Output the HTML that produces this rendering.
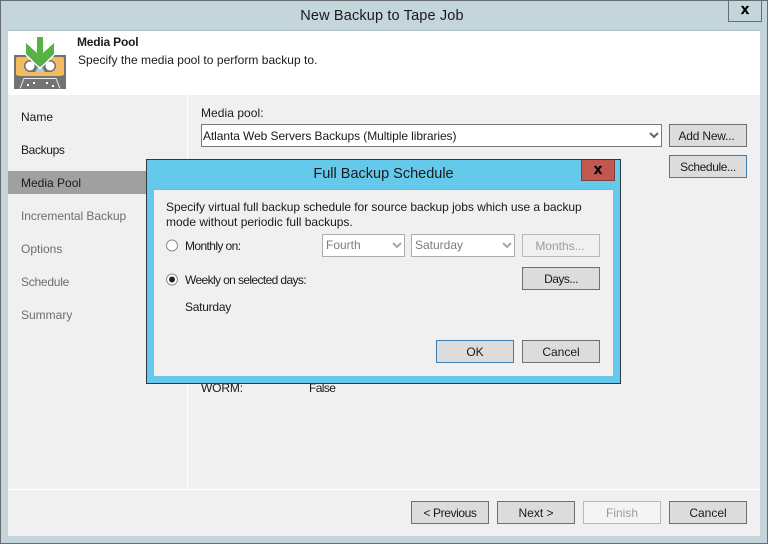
<!DOCTYPE html>
<html>
<head>
<meta charset="utf-8">
<style>
html,body{margin:0;padding:0}
body{width:768px;height:544px;overflow:hidden;position:relative;background:#c4d6dc;font-family:"Liberation Sans",sans-serif;font-size:12px;color:#1a1a1a}
.a{position:absolute;box-sizing:border-box}
.t{position:absolute;white-space:nowrap;line-height:14px}
.g{color:#6d6d6d}
.b{position:absolute;box-sizing:border-box;width:78px;height:23px;background:#dcdcdc;border:1px solid #707070;text-align:center;line-height:22px;white-space:nowrap;color:#1a1a1a}
.f{border-color:#3a7fb5}
.d{background:#f4f4f4;border-color:#b4b8b8;color:#9c9c9c}
.c{position:absolute;box-sizing:border-box;background:#fff;border:1px solid #a9adad;height:23px;line-height:21px;padding-left:3px;color:#7c7c7c;white-space:nowrap}
.x{font-weight:bold;font-size:15px;color:#000;text-align:center;-webkit-text-stroke:.3px #000}
</style>
</head>
<body>
<div class="a" style="left:0;top:0;width:768px;height:544px;border:1px solid #676c72"></div>
<div class="t" style="left:0;top:8px;width:764px;text-align:center;font-size:14.5px;line-height:16px;letter-spacing:.15px">New Backup to Tape Job</div>
<div class="a" style="left:728px;top:0;width:34px;height:22px;border:1px solid #676c72;border-top:0"></div>
<div class="t x" style="left:728px;top:3px;width:34px">x</div>

<div class="a" style="left:8px;top:31px;width:752px;height:505px;background:#f0f0f0"></div>
<div class="a" style="left:8px;top:30px;width:752px;height:1px;background:#a9bcc4"></div>
<div class="a" style="left:8px;top:31px;width:752px;height:64px;background:#fff"></div>
<div class="a" style="left:187px;top:95px;width:1px;height:394px;background:#fff"></div>
<div class="a" style="left:8px;top:489px;width:752px;height:1px;background:#fff"></div>

<svg class="a" style="left:14px;top:37px" width="52" height="53" viewBox="0 0 52 53">
<rect x="0" y="18" width="52" height="34" fill="#737373"/>
<path d="M2 22Q2 20 4 20H48Q50 20 50 22V38L46 39H6L2 38Z" fill="#f2bd62"/>
<rect x="10" y="23" width="32" height="12" rx="6" fill="#737373"/>
<circle cx="16" cy="29" r="4.500" fill="#fff"/>
<circle cx="36" cy="29" r="4.500" fill="#fff"/>
<path d="M21 35L26 27L31 35Z" fill="#a8cde8"/>
<path d="M6 51.500L10 41.500H42L46 51.500" fill="none" stroke="#ececec" stroke-width="1"/>
<rect x="13" y="47" width="2" height="2" fill="#fff"/><rect x="19" y="45" width="2" height="2" fill="#fff"/><rect x="32" y="45" width="2" height="2" fill="#fff"/><rect x="38" y="48" width="2" height="2" fill="#fff"/>
<path d="M12 18L26 31.500L40 18" fill="none" stroke="#fff" stroke-width="1.500"/>
<path d="M12 6V17L26 30L40 17V6L29 16V0H23V16Z" fill="#56b244"/>
</svg>

<div class="t" style="left:77px;top:35px;font-weight:bold;letter-spacing:-.2px">Media Pool</div>
<div class="t" style="left:78px;top:53px;letter-spacing:.03px">Specify the media pool to perform backup to.</div>

<div class="a" style="left:8px;top:171px;width:140px;height:23px;background:#a0a0a0"></div>
<div class="t" style="left:21px;top:110px">Name</div>
<div class="t" style="left:21px;top:143px;letter-spacing:-.35px">Backups</div>
<div class="t" style="left:21px;top:176px">Media Pool</div>
<div class="t g" style="left:21px;top:209px;letter-spacing:-.05px">Incremental Backup</div>
<div class="t g" style="left:21px;top:242px">Options</div>
<div class="t g" style="left:21px;top:275px;letter-spacing:-.25px">Schedule</div>
<div class="t g" style="left:21px;top:308px">Summary</div>

<div class="t" style="left:201px;top:106px;letter-spacing:.05px">Media pool:</div>
<div class="a" style="left:201px;top:124px;width:461px;height:23px;background:#fff;border:1px solid #7a7a7a"></div>
<div class="t" style="left:203px;top:129px;letter-spacing:-.08px">Atlanta Web Servers Backups (Multiple libraries)</div>
<svg class="a" style="left:649px;top:132px" width="10" height="8"><path d="M1 1L5 5L9 1" fill="none" stroke="#666" stroke-width="2"/></svg>
<div class="b" style="left:669px;top:124px;letter-spacing:-.2px;padding-right:3px">Add New...</div>
<div class="b f" style="left:669px;top:155px;letter-spacing:-.4px">Schedule...</div>
<div class="t" style="left:201px;top:381px;letter-spacing:-.15px">WORM:</div>
<div class="t" style="left:309px;top:381px;letter-spacing:-.6px">False</div>

<div class="b" style="left:411px;top:501px;letter-spacing:-.4px">&lt; Previous</div>
<div class="b" style="left:497px;top:501px">Next &gt;</div>
<div class="b d" style="left:583px;top:501px">Finish</div>
<div class="b" style="left:669px;top:501px">Cancel</div>

<!-- dialog -->
<div class="a" style="left:146px;top:159px;width:475px;height:225px;background:#65c9ec;border:1px solid #2f3a40"></div>
<div class="a" style="left:154px;top:190px;width:459px;height:186px;background:#f0f0f0;box-shadow:0 -1px 0 #7fb2cc"></div>
<div class="t" style="left:147px;top:166px;width:473px;text-align:center;font-size:14.5px;line-height:16px">Full Backup Schedule</div>
<div class="a" style="left:581px;top:160px;width:34px;height:21px;background:#c0584f;border:1px solid #7d3f3a;border-top:0"></div>
<div class="t x" style="left:581px;top:163px;width:34px">x</div>

<div class="t" style="left:166px;top:200px;letter-spacing:-.05px">Specify virtual full backup schedule for source backup jobs which use a backup</div>
<div class="t" style="left:166px;top:215px">mode without periodic full backups.</div>

<svg class="a" style="left:165px;top:238px" width="14" height="15"><circle cx="7" cy="7.500" r="5.500" fill="#fff" stroke="#8a8a8a"/></svg>
<div class="t" style="left:185px;top:239px;letter-spacing:-.6px">Monthly on:</div>
<svg class="a" style="left:165px;top:272px" width="14" height="15"><circle cx="7" cy="7.500" r="5.500" fill="#fff" stroke="#8a8a8a"/><circle cx="7" cy="7.500" r="3" fill="#222"/></svg>
<div class="t" style="left:185px;top:273px;letter-spacing:-.62px">Weekly on selected days:</div>
<div class="t" style="left:185px;top:300px;letter-spacing:-.25px">Saturday</div>

<div class="c" style="left:322px;top:234px;width:83px">Fourth</div>
<svg class="a" style="left:392px;top:242px" width="10" height="8"><path d="M1 1L5 5L9 1" fill="none" stroke="#a8a8a8" stroke-width="2"/></svg>
<div class="c" style="left:411px;top:234px;width:104px">Saturday</div>
<svg class="a" style="left:502px;top:242px" width="10" height="8"><path d="M1 1L5 5L9 1" fill="none" stroke="#a8a8a8" stroke-width="2"/></svg>
<div class="b d" style="left:522px;top:234px;background:#f0f0f0;padding-right:2px">Months...</div>
<div class="b" style="left:522px;top:267px;letter-spacing:-.5px">Days...</div>
<div class="b f" style="left:436px;top:340px">OK</div>
<div class="b" style="left:522px;top:340px">Cancel</div>
</body>
</html>
